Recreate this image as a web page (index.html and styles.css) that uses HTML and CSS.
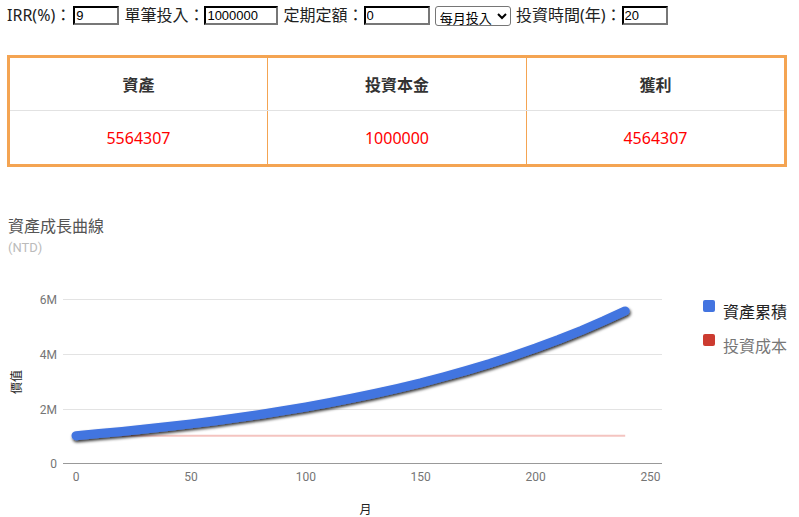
FILE: index.html
```html
<!DOCTYPE html>
<html lang="zh-Hant">
<head>
    <meta charset="UTF-8">
    <meta name="viewport" content="width=device-width, initial-scale=1.0">
    <title>資產成長試算</title>
    <link rel="stylesheet" href="styles.css">
</head>
<body>
    <div class="controls">
        IRR(%)：<input type="text" class="field w-sm first" value="9"> 單筆投入：<input type="text" class="field w-lg" value="1000000"> 定期定額：<input type="text" class="field w-md" value="0"> <select class="period"><option>每月投入</option><option>每年投入</option></select> 投資時間(年)：<input type="text" class="field w-sm" value="20">
    </div>

    <table class="summary">
        <tr>
            <th>資產</th>
            <th>投資本金</th>
            <th>獲利</th>
        </tr>
        <tr>
            <td>5564307</td>
            <td>1000000</td>
            <td>4564307</td>
        </tr>
    </table>

    <svg class="chart" width="799" height="322" viewBox="0 195 799 322">
        <defs>
            <filter id="shadow" x="-5%" y="-20%" width="110%" height="160%">
                <feDropShadow dx="1" dy="2" stdDeviation="1.6" flood-color="#000" flood-opacity="0.8"/>
            </filter>
        </defs>

        <text class="title" x="8" y="232">資產成長曲線</text>
        <text class="subtitle" x="8" y="252">(NTD)</text>

        <!-- grid -->
        <line class="grid" x1="63" y1="299.5" x2="662" y2="299.5"/>
        <line class="grid" x1="63" y1="354.5" x2="662" y2="354.5"/>
        <line class="grid" x1="63" y1="409.5" x2="662" y2="409.5"/>
        <line class="baseline" x1="63" y1="463.5" x2="662" y2="463.5"/>

        <text class="tick" x="57" y="304" text-anchor="end">6M</text>
        <text class="tick" x="57" y="359" text-anchor="end">4M</text>
        <text class="tick" x="57" y="413.5" text-anchor="end">2M</text>
        <text class="tick" x="57" y="468" text-anchor="end">0</text>

        <text class="tick" x="76" y="481" text-anchor="middle">0</text>
        <text class="tick" x="190.9" y="481" text-anchor="middle">50</text>
        <text class="tick" x="305.8" y="481" text-anchor="middle">100</text>
        <text class="tick" x="420.7" y="481" text-anchor="middle">150</text>
        <text class="tick" x="535.6" y="481" text-anchor="middle">200</text>
        <text class="tick" x="650.5" y="481" text-anchor="middle">250</text>

        <text class="axis-title" x="15.5" y="382" text-anchor="middle" dominant-baseline="central" transform="rotate(-90 15.5 382)">價值</text>
        <text class="axis-title" x="365.5" y="508" text-anchor="middle" dominant-baseline="central">月</text>

        <!-- series -->
        <line class="cost" x1="76" y1="435.7" x2="625.2" y2="435.7"/>
        <polyline class="asset" filter="url(#shadow)"
            points="76,435.7 99,433.6 121.96,431.45 144.9,429.1 167.92,426.57 190.9,423.9 213.88,420.94 236.9,417.8 259.84,414.45 282.8,410.8 305.8,406.95 328.8,402.8 351.76,398.29 374.7,393.5 397.72,388.3 420.7,382.8 443.68,376.76 466.7,370.3 489.64,363.44 512.6,356.0 535.6,348.06 558.6,339.5 581.56,330.31 603.4,320.9 625.2,310.9"/>

        <!-- legend -->
        <rect x="703" y="300" width="12" height="12" rx="2" fill="#4374e0"/>
        <text class="legend" x="723" y="317.5">資產累積</text>
        <rect x="703" y="334" width="12" height="12" rx="2" fill="#cc3b30"/>
        <text class="legend muted" x="723" y="351.5">投資成本</text>
    </svg>
</body>
</html>
```

FILE: styles.css
```css
* {
    box-sizing: border-box;
}

body {
    margin: 0;
    padding: 4px 7px 0;
    font-family: "Noto Sans", "Noto Sans CJK TC", sans-serif;
    color: #222;
    overflow: hidden;
}

.controls {
    font-size: 16px;
    line-height: 22px;
    white-space: nowrap;
}

.field {
    vertical-align: top;
    margin: 2px 1px 0 0;
    height: 19px;
    padding: 0 1px;
    font-family: "Liberation Sans", Arial, sans-serif;
    font-size: 13px;
    color: #000;
    border: 2px inset #666;
    border-color: #333 #777 #777 #333;
}

.field.first {
    margin-left: 2px;
}

.w-sm { width: 46px; }
.w-md { width: 66px; }
.w-lg { width: 74px; }

.period {
    vertical-align: top;
    margin: 2px 1px 0 0;
    width: 76px;
    height: 20px;
    font-family: "Noto Sans CJK TC", sans-serif;
    font-size: 13px;
    border: 1px solid #767676;
    border-radius: 3px;
    background: #fff;
    color: #000;
}

.summary {
    width: 780px;
    margin-top: 29px;
    border-collapse: collapse;
    border: 3px solid #f4a452;
}

.summary th,
.summary td {
    width: 33.33%;
    text-align: center;
    border-left: 1px solid #f4a452;
    font-size: 16px;
}

.summary th {
    height: 54px;
    font-family: "Noto Sans CJK TC", sans-serif;
    font-weight: bold;
    color: #333;
    border-bottom: 1px solid #e2e2e2;
}

.summary td {
    height: 55px;
    color: #f00;
}

.chart {
    display: block;
    margin: 28px 0 0 -7px;
    font-family: Roboto, "Noto Sans CJK TC", sans-serif;
}

.title {
    font-family: "Noto Sans CJK TC", sans-serif;
    font-size: 16px;
    fill: #555;
}

.subtitle {
    font-size: 13px;
    fill: #bbb;
}

.grid {
    stroke: #e3e3e3;
    stroke-width: 1;
}

.baseline {
    stroke: #999;
    stroke-width: 1;
}

.tick {
    font-size: 12px;
    fill: #757575;
}

.axis-title {
    font-family: "Noto Sans CJK TC", sans-serif;
    font-size: 12px;
    fill: #222;
}

.cost {
    stroke: #f4c4c0;
    stroke-width: 2;
}

.asset {
    fill: none;
    stroke: #4374e0;
    stroke-width: 9;
    stroke-linecap: round;
    stroke-linejoin: round;
}

.legend {
    font-family: "Noto Sans CJK TC", sans-serif;
    font-size: 16px;
    fill: #222;
}

.legend.muted {
    fill: #777;
}
```
